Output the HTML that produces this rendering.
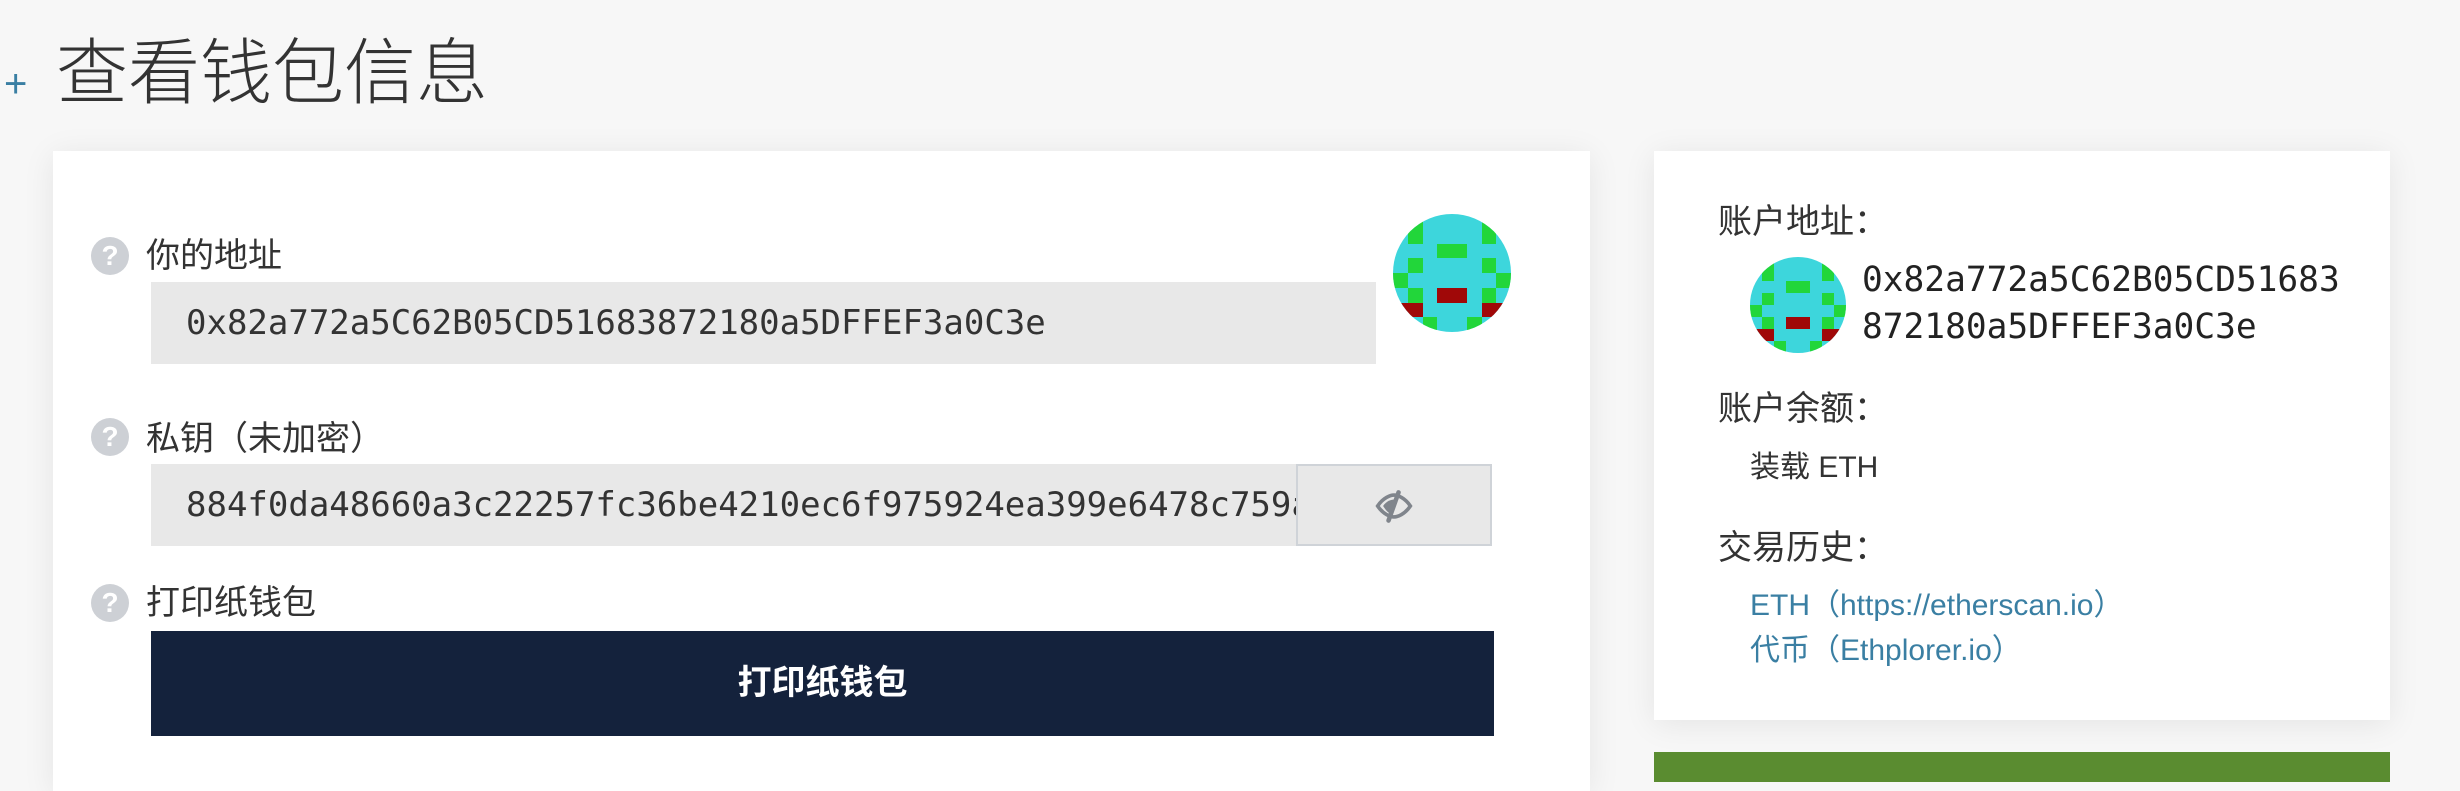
<!DOCTYPE html>
<html><head><meta charset="utf-8"><style>
*{margin:0;padding:0;box-sizing:border-box}
body{width:2460px;height:776px;background:#f7f7f7;position:relative;overflow:hidden;font-family:"Liberation Sans","Noto Sans CJK SC",sans-serif;color:#333}
.a{position:absolute}
.card{position:absolute;background:#fff;box-shadow:0 4px 30px rgba(0,0,0,0.08)}
.lbl{position:absolute;font-size:34px;color:#333;line-height:40px}
.q{position:absolute;width:38px;height:38px;border-radius:50%;background:#cdd0d5;color:#fff;font-weight:bold;font-size:28px;text-align:center;line-height:38px}
.inp{position:absolute;background:#e8e8e8;font-family:"DejaVu Sans Mono","Liberation Mono",monospace;font-size:34px;color:#333;white-space:nowrap;overflow:hidden;padding-left:35px}
.mono{font-family:"DejaVu Sans Mono","Liberation Mono",monospace}
.id{position:absolute;border-radius:50%;overflow:hidden;display:grid;grid-template-columns:repeat(8,1fr);grid-template-rows:repeat(8,1fr);background:#3dd6dc}
.id i{display:block}
.g{background:#22d63a}.r{background:#a00808}
.rt{position:absolute;left:1718px;font-size:34px;color:#333;line-height:40px}
.lk{position:absolute;left:1750px;font-size:30px;color:#3a7fa3;line-height:36px}
</style></head><body>
<div class="a" style="left:4px;top:64px;font-size:40px;color:#3a7fa3;line-height:40px">+</div>
<div class="a" style="left:56px;top:34px;font-size:72px;color:#333;line-height:80px;font-weight:300">查看钱包信息</div>

<div class="card" style="left:53px;top:151px;width:1537px;height:640px"></div>
<div class="q" style="left:91px;top:237px">?</div>
<div class="lbl" style="left:146px;top:236px">你的地址</div>
<div class="inp" style="left:151px;top:282px;width:1225px;height:82px;line-height:82px">0x82a772a5C62B05CD51683872180a5DFFEF3a0C3e</div>
<div class="id" style="left:1393px;top:214px;width:118px;height:118px">
<i></i><i class="g"></i><i></i><i></i><i></i><i></i><i class="g"></i><i></i>
<i></i><i class="g"></i><i></i><i></i><i></i><i></i><i class="g"></i><i></i>
<i></i><i></i><i></i><i class="g"></i><i class="g"></i><i></i><i></i><i></i>
<i></i><i class="g"></i><i></i><i></i><i></i><i></i><i class="g"></i><i></i>
<i class="g"></i><i></i><i></i><i></i><i></i><i></i><i></i><i class="g"></i>
<i></i><i class="g"></i><i></i><i class="r"></i><i class="r"></i><i></i><i class="g"></i><i></i>
<i class="r"></i><i class="r"></i><i></i><i></i><i></i><i></i><i class="r"></i><i class="r"></i>
<i></i><i></i><i class="g"></i><i></i><i></i><i class="g"></i><i></i><i></i>
</div>

<div class="q" style="left:91px;top:418px">?</div>
<div class="lbl" style="left:146px;top:419px">私钥（未加密）</div>
<div class="inp" style="left:151px;top:464px;width:1145px;height:82px;line-height:82px">884f0da48660a3c22257fc36be4210ec6f975924ea399e6478c759a</div>
<div class="a" style="left:1296px;top:464px;width:196px;height:82px;background:#e8e8e8;border:2px solid #cfd3d8">
<svg class="a" style="left:76px;top:23px" width="40" height="34" viewBox="0 0 44 36"><path d="M4 18 C10 9 18 6 22 6 C26 6 34 9 40 18 C34 27 26 30 22 30 C18 30 10 27 4 18Z" fill="none" stroke="#80858c" stroke-width="4"/><path d="M27 3 L16 34" stroke="#80858c" stroke-width="5" stroke-linecap="round"/><path d="M10 18 C14 12 19 11 22 11 L17 26 C14 24 12 21 10 18Z" fill="#80858c"/></svg>
</div>

<div class="q" style="left:91px;top:584px">?</div>
<div class="lbl" style="left:146px;top:583px">打印纸钱包</div>
<div class="a" style="left:151px;top:631px;width:1343px;height:105px;background:#14223c;color:#fff;font-size:34px;font-weight:bold;text-align:center;line-height:105px">打印纸钱包</div>

<div class="card" style="left:1654px;top:151px;width:736px;height:569px"></div>
<div class="rt" style="top:202px">账户地址：</div>
<div class="id" style="left:1750px;top:257px;width:96px;height:96px">
<i></i><i class="g"></i><i></i><i></i><i></i><i></i><i class="g"></i><i></i>
<i></i><i class="g"></i><i></i><i></i><i></i><i></i><i class="g"></i><i></i>
<i></i><i></i><i></i><i class="g"></i><i class="g"></i><i></i><i></i><i></i>
<i></i><i class="g"></i><i></i><i></i><i></i><i></i><i class="g"></i><i></i>
<i class="g"></i><i></i><i></i><i></i><i></i><i></i><i></i><i class="g"></i>
<i></i><i class="g"></i><i></i><i class="r"></i><i class="r"></i><i></i><i class="g"></i><i></i>
<i class="r"></i><i class="r"></i><i></i><i></i><i></i><i></i><i class="r"></i><i class="r"></i>
<i></i><i></i><i class="g"></i><i></i><i></i><i class="g"></i><i></i><i></i>
</div>
<div class="a mono" style="left:1862px;top:257px;font-size:34.5px;line-height:47px;color:#222">0x82a772a5C62B05CD51683<br>872180a5DFFEF3a0C3e</div>
<div class="rt" style="top:389px">账户余额：</div>
<div class="a" style="left:1750px;top:450px;font-size:30px;line-height:36px;color:#333">装载 ETH</div>
<div class="rt" style="top:528px">交易历史：</div>
<div class="lk" style="top:588px">ETH（https://etherscan.io）</div>
<div class="lk" style="top:633px">代币（Ethplorer.io）</div>

<div class="a" style="left:1654px;top:752px;width:736px;height:30px;background:#5a8c30"></div>
</body></html>
